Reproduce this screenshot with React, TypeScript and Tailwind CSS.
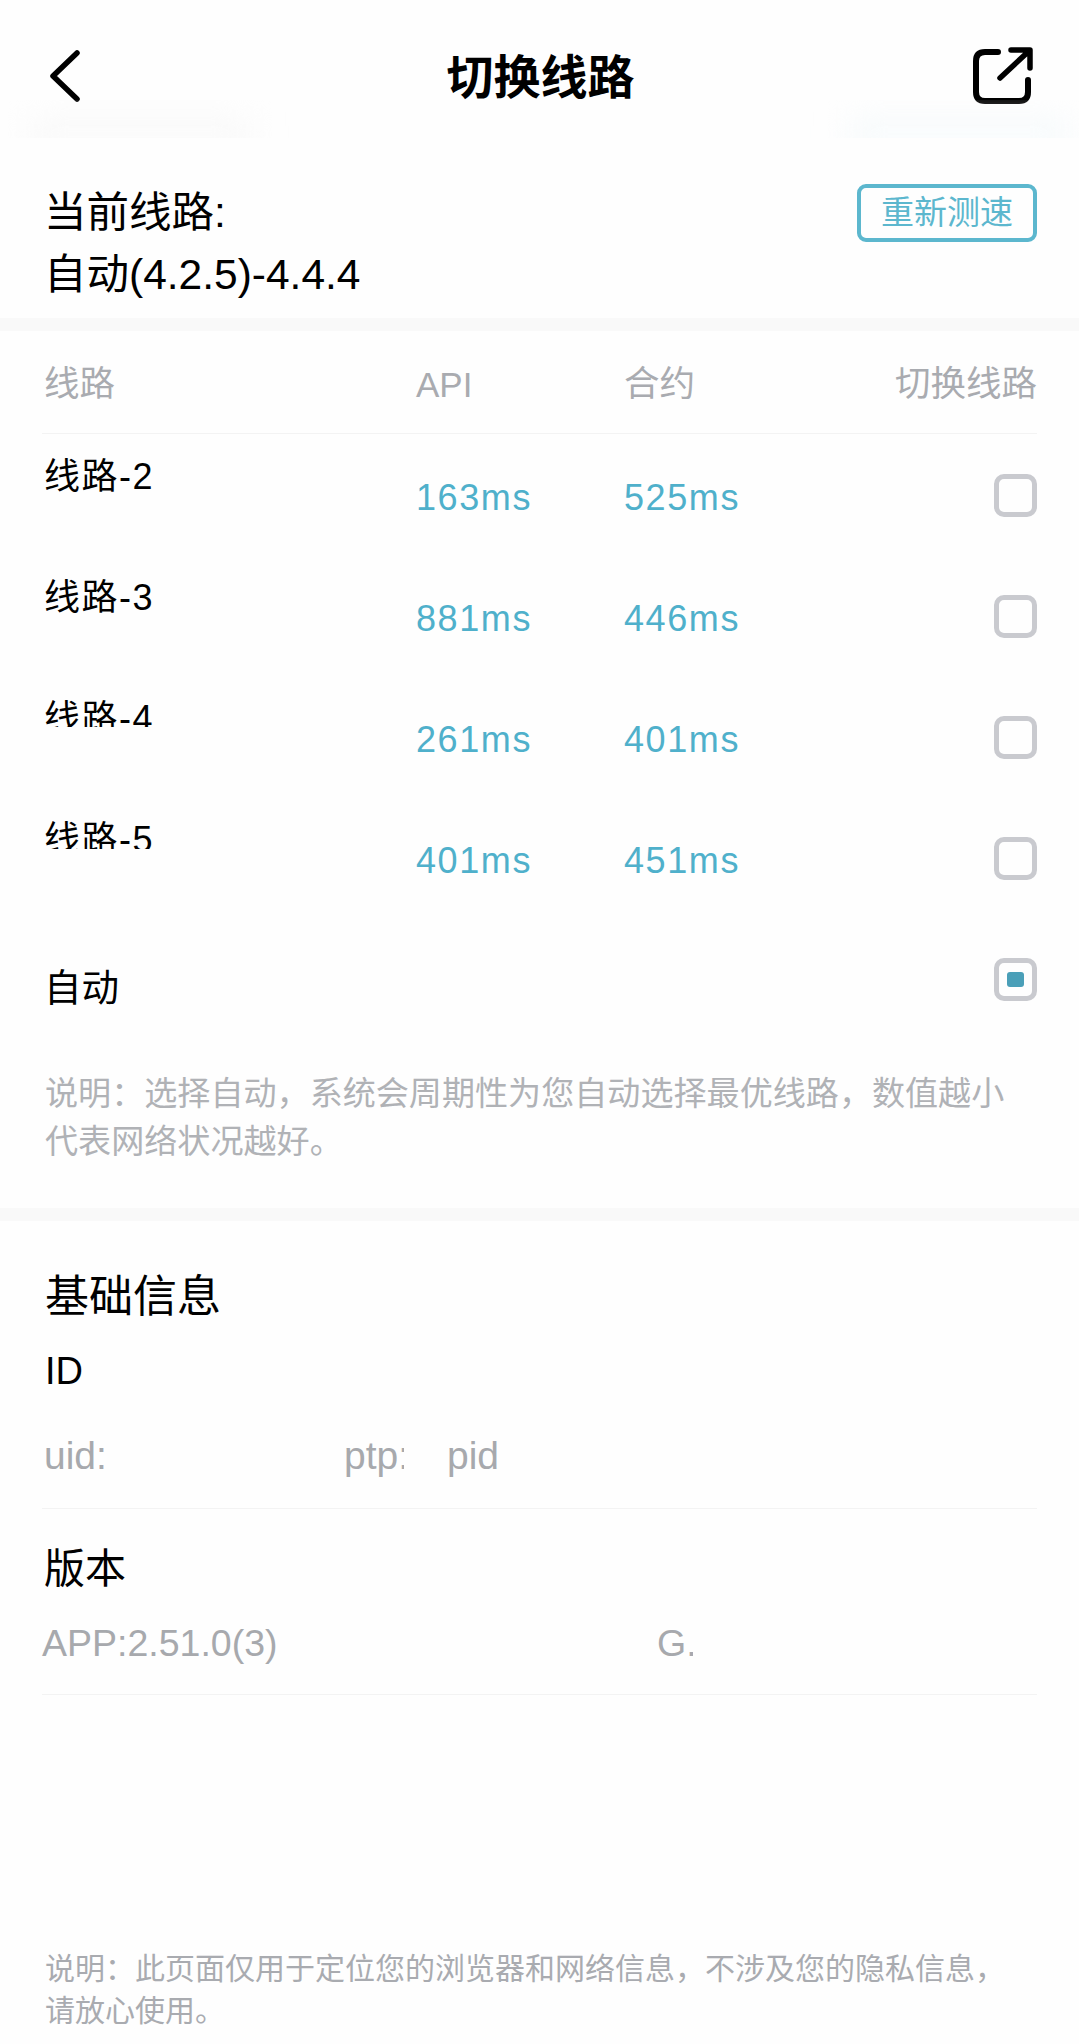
const sans = "font-['Liberation_Sans','Noto_Sans_CJK_SC',sans-serif]"

const lines = [
  { name: "线路-2", api: "163ms", contract: "525ms", clip: "h-[60px]" },
  { name: "线路-3", api: "881ms", contract: "446ms", clip: "h-[60px]" },
  { name: "线路-4", api: "261ms", contract: "401ms", clip: "h-[32px]" },
  { name: "线路-5", api: "401ms", contract: "451ms", clip: "h-[33px]" },
]

function Checkbox({ checked = false }: { checked?: boolean }) {
  return (
    <div className="flex h-[43px] w-[43px] items-center justify-center rounded-[10px] border-[5px] border-[#c9cacf]">
      {checked ? <div className="h-[15px] w-[17px] rounded-[3px] bg-[#4a9fb8]" /> : null}
    </div>
  )
}

function Divider() {
  return <div className="h-[13px] bg-[#f9f9f9]" />
}

export default function App() {
  return (
    <div className={`${sans} flex h-[2044px] w-[1079px] flex-col overflow-hidden bg-[#fefefe] text-black`}>
      <header className="flex h-[100px] items-end justify-between pl-[48px] pr-[46px]">
        <svg width="34" height="52" viewBox="0 0 34 52" fill="none" className="mb-[-2px]">
          <path d="M29 3 L5 26 L29 49" stroke="#000" strokeWidth="5.5" strokeLinecap="round" strokeLinejoin="round" />
        </svg>
        <h1 className="mb-[-1px] ml-[26px] text-[47px] font-bold leading-[46px]">切换线路</h1>
        <svg width="60" height="58" viewBox="0 0 60 58" fill="none" className="mb-[-4px]">
          <path
            d="M25 6 H12 Q3 6 3 15 V46 Q3 55 12 55 H46 Q55 55 55 46 V34"
            stroke="#000"
            strokeWidth="6"
            strokeLinecap="round"
          />
          <path d="M27 32 L56 5 M38 4 H57 V22" stroke="#000" strokeWidth="5.5" strokeLinecap="round" strokeLinejoin="round" />
        </svg>
      </header>

      <div className="flex h-[38px] justify-between overflow-hidden">
        <div className="ml-[30px] mt-[22px] h-[24px] w-[220px] bg-[#f8f8f8] blur-lg" />
        <div className="mr-[10px] mt-[22px] h-[24px] w-[220px] bg-[#f5fafc] blur-lg" />
      </div>

      <section className="flex h-[180px] items-start justify-between pl-[44px] pr-[42px] pt-[44px]">
        <div className="text-[42.5px] leading-[62px]">
          <div>当前线路:</div>
          <div>自动(4.2.5)-4.4.4</div>
        </div>
        <button
          type="button"
          className="mt-[2px] h-[58px] w-[180px] rounded-[9px] border-[4px] border-[#5cb7ce] text-center text-[33px] leading-[48px] text-[#5cb7ce]"
        >
          重新测速
        </button>
      </section>

      <Divider />

      <section className="px-[42px]">
        <div className="flex h-[103px] items-center border-b border-[#f3f3f3] pt-[6px] text-[35.5px] text-[#a9abb0]">
          <div className="w-[374px] pl-[2px]">线路</div>
          <div className="w-[208px] text-[35px]">API</div>
          <div className="flex-1">合约</div>
          <div>切换线路</div>
        </div>

        {lines.map((line) => (
          <div key={line.name} className="flex h-[121px]">
            <div className="w-[374px] pl-[2px] pt-[19px]">
              <div className={`${line.clip} overflow-hidden text-[36px] leading-[48px] tracking-[1.5px]`}>{line.name}</div>
            </div>
            <div className="w-[208px] pt-[41px] text-[36px] leading-[46px] tracking-[1.6px] text-[#4fb0cb]">{line.api}</div>
            <div className="flex-1 pt-[41px] text-[36px] leading-[46px] tracking-[1.6px] text-[#4fb0cb]">{line.contract}</div>
            <div className="pt-[40px]">
              <Checkbox />
            </div>
          </div>
        ))}

        <div className="flex h-[124px] items-start justify-between pl-[2px]">
          <div className="pt-[46px] text-[37.5px] leading-[48px]">自动</div>
          <div className="pt-[40px]">
            <Checkbox checked />
          </div>
        </div>

        <p className="pl-[3px] pr-[15px] pt-[28px] text-[33.1px] leading-[48px] text-[#b0b2b6]">
          说明：选择自动，系统会周期性为您自动选择最优线路，数值越小代表网络状况越好。
        </p>
      </section>

      <div className="mt-[42px]">
        <Divider />
      </div>

      <section className="px-[42px]">
        <h2 className="pl-[3px] pt-[47px] text-[44px] font-normal leading-[58px]">基础信息</h2>
        <div className="pl-[3px] pt-[23px] text-[38px] leading-[44px]">ID</div>
        <div className="flex h-[116px] items-start border-b border-[#f3f3f3] pt-[41px] text-[39px] leading-[44px] text-[#a7a9ad]">
          <div className="w-[302px] pl-[2px]">uid:</div>
          <div className="w-[103px]">
            <div className="w-[60px] overflow-hidden">ptp:</div>
          </div>
          <div>pid</div>
        </div>
        <div className="pl-[2px] pt-[34px] text-[41px] leading-[52px]">版本</div>
        <div className="flex h-[100px] items-start border-b border-[#f3f3f3] pt-[26px] text-[37.5px] leading-[44px] text-[#a7a9ad]">
          <div className="w-[615px]">APP:2.51.0(3)</div>
          <div className="w-[36px] overflow-hidden">G.</div>
        </div>
      </section>

      <p className="mt-auto pb-[12px] pl-[45px] pr-[60px] text-[30px] leading-[42px] text-[#a9abb0]">
        说明：此页面仅用于定位您的浏览器和网络信息，不涉及您的隐私信息，请放心使用。
      </p>
    </div>
  )
}
